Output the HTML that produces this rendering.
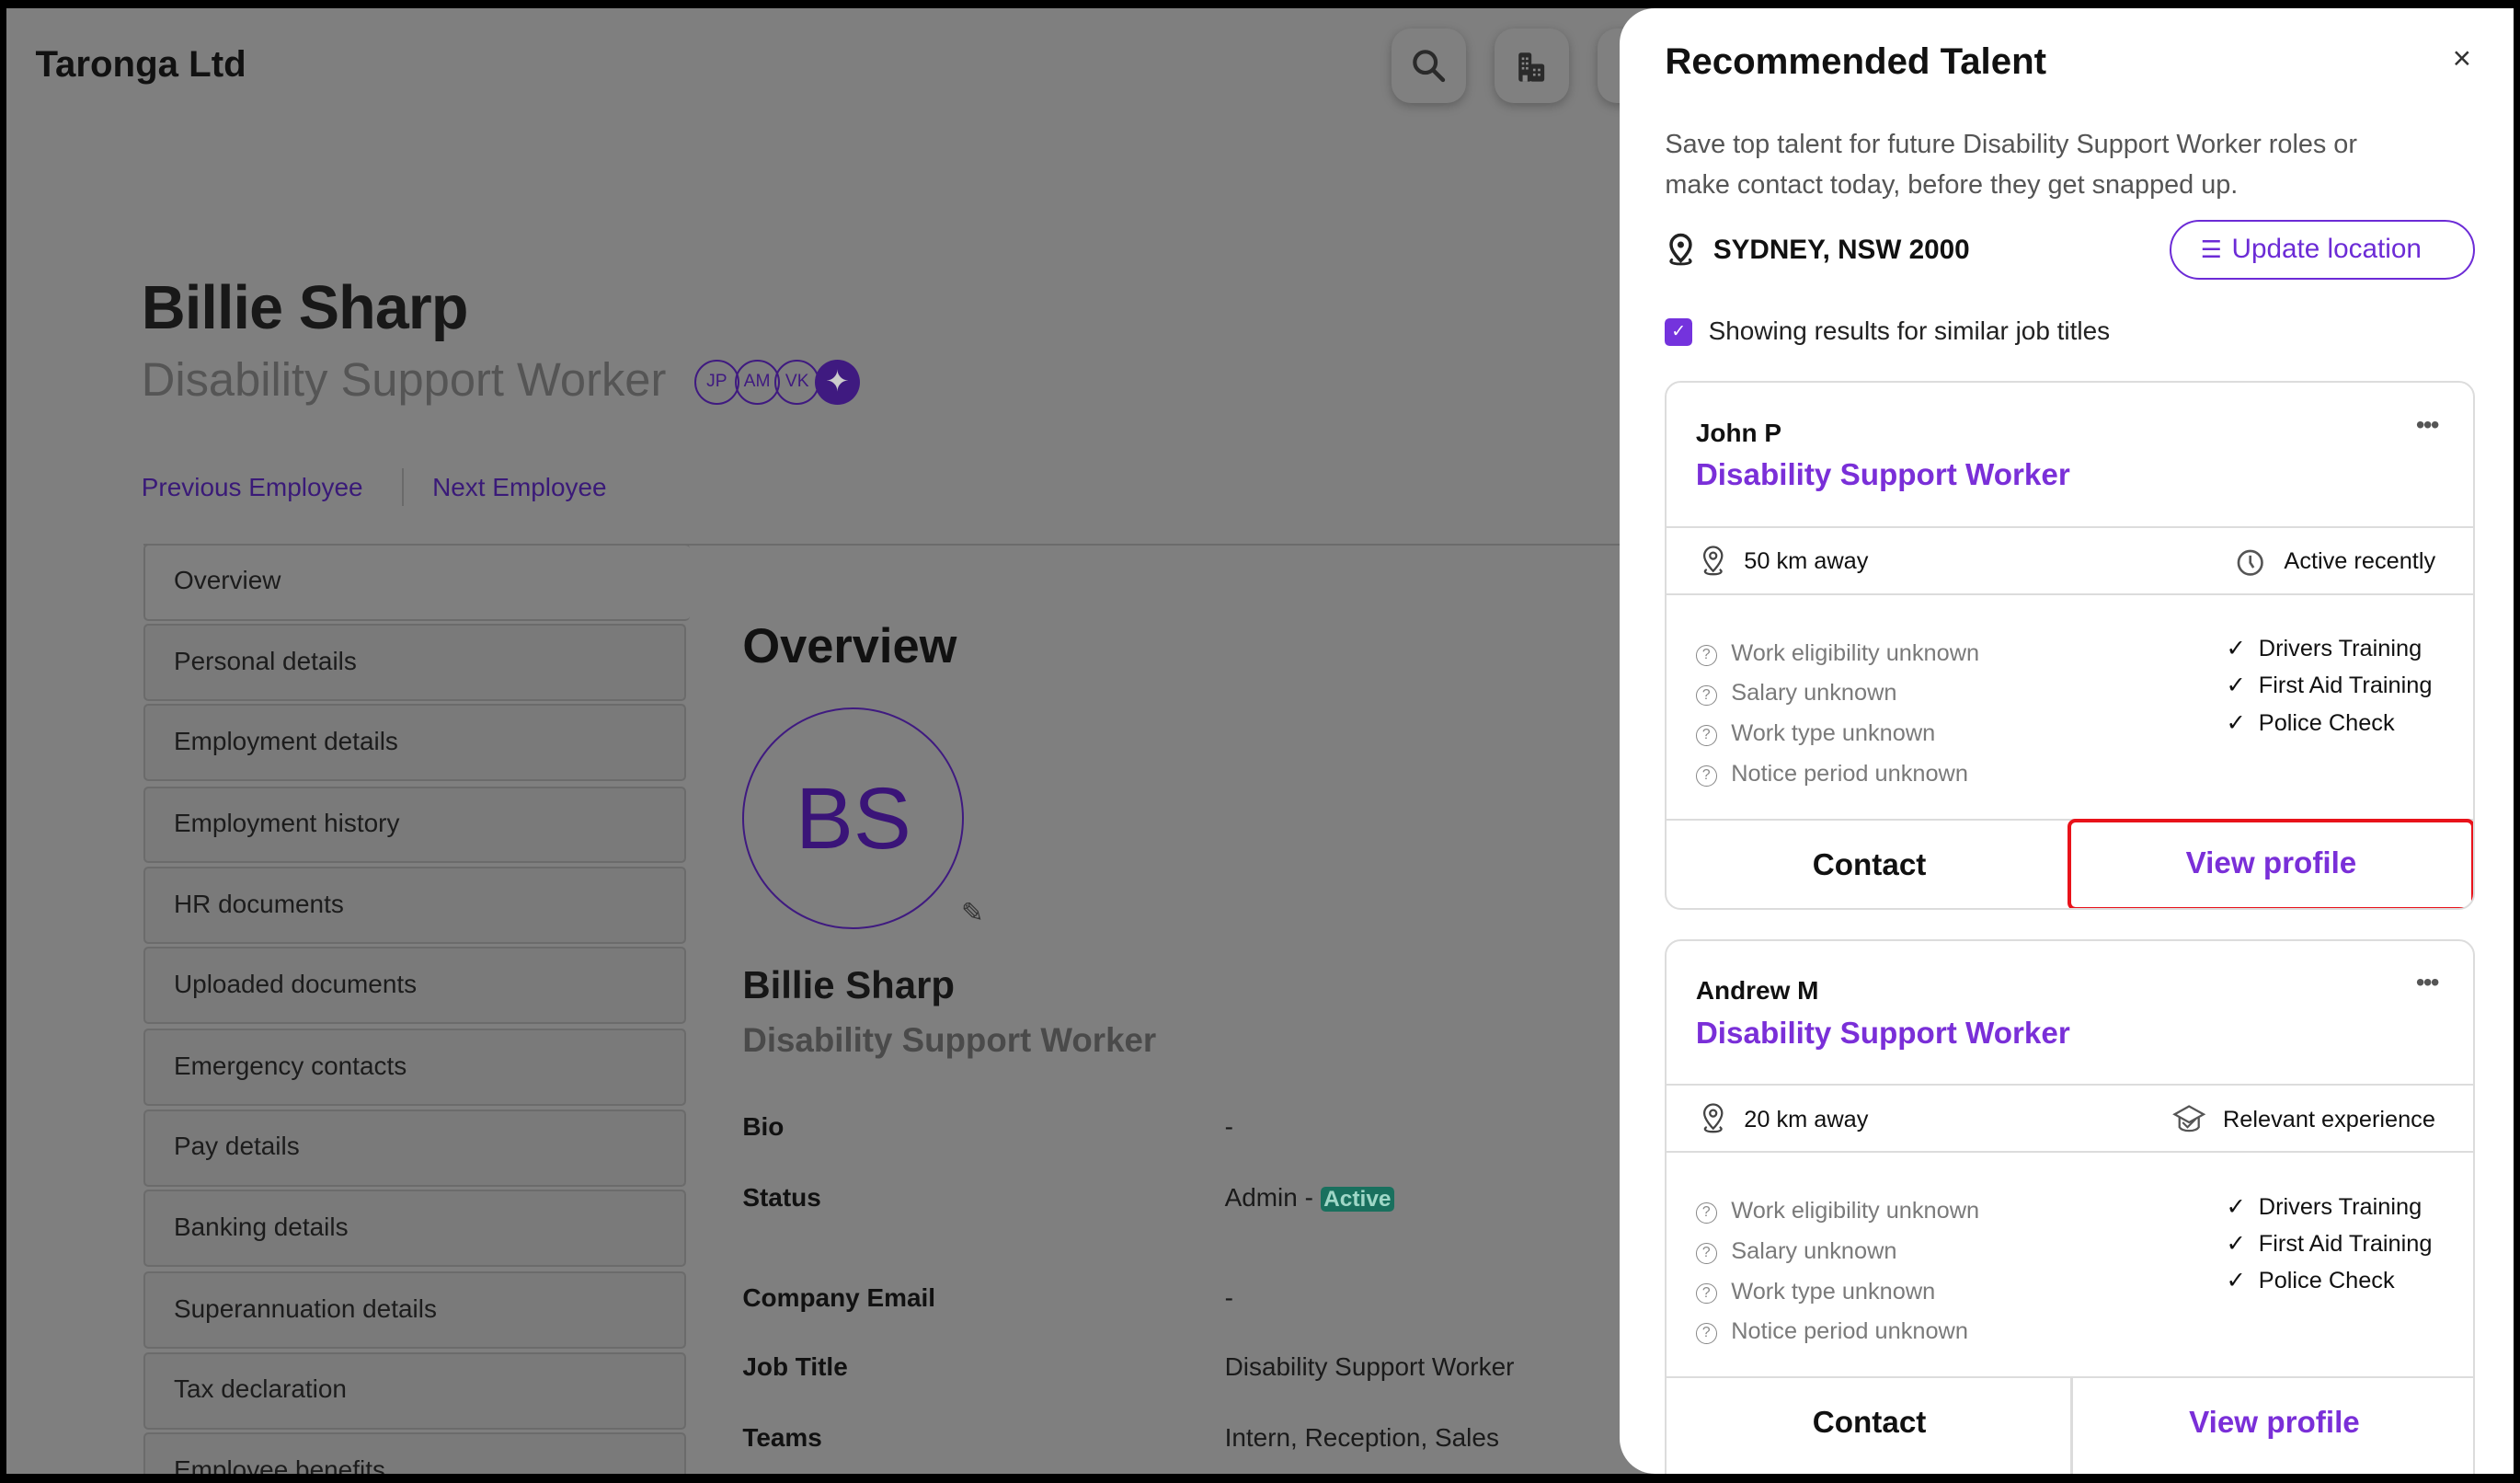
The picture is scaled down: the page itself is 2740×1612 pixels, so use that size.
<!DOCTYPE html>
<html><head><meta charset="utf-8"><style>
*{box-sizing:border-box;margin:0;padding:0}
html,body{width:2740px;height:1612px;overflow:hidden;background:#000}
#w{zoom:1.7475;width:1568px;height:922.5px;position:relative;background:#000;font-family:"Liberation Sans",sans-serif;overflow:hidden}
#bg{position:absolute;left:4px;top:5px;width:1560px;height:912px;background:#7f7f7f;overflow:hidden}
.a{position:absolute;white-space:nowrap}
.tb{position:absolute;top:13px;width:46px;height:46px;border-radius:12px;background:#808080;box-shadow:0 2px 6px rgba(0,0,0,.25)}
.nav{position:absolute;left:85px;width:338px;height:48px;border:1.5px solid #6b6b6b;border-radius:3px;background:#7a7a7a;font-size:16px;color:#1c1c1c;padding:13px 0 0 18px}
.lbl{position:absolute;left:458px;font-size:16px;font-weight:bold;color:#111}
.val{position:absolute;left:758px;font-size:16px;color:#1a1a1a}
#p{position:absolute;left:1008px;top:5px;width:556px;height:912px;background:#fff;border-radius:22px 0 0 22px;overflow:hidden}
.card{position:absolute;left:28px;width:504px;border:1.5px solid #dcdcdc;border-radius:10px;background:#fff;overflow:hidden}
.hl{border-top:1.5px solid #dcdcdc}
.g{color:#7a7a7a;font-size:14.5px}
.k{color:#111;font-size:14.5px}
.q{display:inline-block;width:13px;height:13px;border:1px solid #888;border-radius:50%;font-size:9px;text-align:center;line-height:11px;color:#888;margin-right:9px;vertical-align:1px}
.btn{position:absolute;top:0;height:56px;width:252px;text-align:center;font-size:19px;font-weight:bold;line-height:56px}
.ic{position:absolute}
</style></head><body><div id="w"><div id="bg">
<div class="a" style="left:18px;top:22px;font-size:23px;font-weight:bold;color:#111">Taronga Ltd</div>
<div class="tb" style="left:862px"><svg width="46" height="46" viewBox="0 0 46 46"><circle cx="21" cy="21" r="6.5" fill="none" stroke="#2a2a2a" stroke-width="2.4"/><path d="M26 26l6 6" stroke="#2a2a2a" stroke-width="2.6" stroke-linecap="round"/></svg></div>
<div class="tb" style="left:926px"><svg width="46" height="46" viewBox="0 0 46 46"><rect x="15" y="15" width="8" height="18" rx="1.5" fill="#2a2a2a"/><rect x="22" y="22" width="9" height="11" rx="1.5" fill="#2a2a2a"/><g fill="#888"><rect x="17" y="18" width="1.5" height="1.5"/><rect x="19.5" y="18" width="1.5" height="1.5"/><rect x="17" y="21" width="1.5" height="1.5"/><rect x="19.5" y="21" width="1.5" height="1.5"/><rect x="17" y="24" width="1.5" height="1.5"/><rect x="19.5" y="24" width="1.5" height="1.5"/><rect x="17.5" y="29" width="3" height="4"/><rect x="24" y="25" width="1.5" height="1.5"/><rect x="27" y="25" width="1.5" height="1.5"/><rect x="24" y="28" width="1.5" height="1.5"/><rect x="27" y="28" width="1.5" height="1.5"/></g></svg></div>
<div class="tb" style="left:990px"></div>
<div class="a" style="left:84px;top:165px;font-size:38px;font-weight:bold;color:#181818;letter-spacing:-.5px">Billie Sharp</div>
<div class="a" style="left:84px;top:214px;font-size:29px;color:#555">Disability Support Worker</div>
<div class="a" style="left:428px;top:219px;display:flex">
<span style="width:28px;height:28px;border:1.5px solid #3f1a80;border-radius:50%;font-size:11px;color:#3f1a80;text-align:center;line-height:25px">JP</span>
<span style="width:28px;height:28px;border:1.5px solid #3f1a80;border-radius:50%;font-size:11px;color:#3f1a80;text-align:center;line-height:25px;margin-left:-3px">AM</span>
<span style="width:28px;height:28px;border:1.5px solid #3f1a80;border-radius:50%;font-size:11px;color:#3f1a80;text-align:center;line-height:25px;margin-left:-3px">VK</span>
<span style="width:28px;height:28px;background:#3f1a80;border-radius:50%;margin-left:-3px;color:#ccc;font-size:18px;text-align:center;line-height:28px">✦</span></div>
<div class="a" style="left:84px;top:289px;font-size:16px;color:#3a1a78">Previous Employee</div>
<div class="a" style="left:246px;top:286px;width:1px;height:24px;background:#6a6a6a"></div>
<div class="a" style="left:265px;top:289px;font-size:16px;color:#3a1a78">Next Employee</div>
<div class="a" style="left:85px;top:333px;width:930px;height:1.5px;background:#6b6b6b"></div>
<div class="nav" style="top:333px;width:340px;background:#7f7f7f;border-right:none">Overview</div>
<div class="nav" style="top:383px">Personal details</div>
<div class="nav" style="top:433px">Employment details</div>
<div class="nav" style="top:484px">Employment history</div>
<div class="nav" style="top:534px">HR documents</div>
<div class="nav" style="top:584px">Uploaded documents</div>
<div class="nav" style="top:635px">Emergency contacts</div>
<div class="nav" style="top:685px">Pay details</div>
<div class="nav" style="top:735px">Banking details</div>
<div class="nav" style="top:786px">Superannuation details</div>
<div class="nav" style="top:836px">Tax declaration</div>
<div class="nav" style="top:886px">Employee benefits</div>
<div class="a" style="left:458px;top:380px;font-size:30px;font-weight:bold;color:#111">Overview</div>
<div class="a" style="left:458px;top:435px;width:138px;height:138px;border:1.5px solid #3f1a80;border-radius:50%;text-align:center;line-height:136px;font-size:54px;color:#3a1478">BS</div>
<div class="a" style="left:594px;top:553px;font-size:17px;color:#333">✎</div>
<div class="a" style="left:458px;top:594px;font-size:24px;font-weight:bold;color:#161616">Billie Sharp</div>
<div class="a" style="left:458px;top:630px;font-size:21px;font-weight:bold;color:#4a4a4a">Disability Support Worker</div>
<div class="lbl" style="top:687px">Bio</div><div class="val" style="top:687px">-</div>
<div class="lbl" style="top:731px">Status</div><div class="val" style="top:731px">Admin - <span style="background:#19705e;color:#9fd7c7;font-weight:bold;font-size:14px;padding:0 2px;border-radius:3px">Active</span></div>
<div class="lbl" style="top:793px">Company Email</div><div class="val" style="top:793px">-</div>
<div class="lbl" style="top:836px">Job Title</div><div class="val" style="top:836px">Disability Support Worker</div>
<div class="lbl" style="top:880px">Teams</div><div class="val" style="top:880px">Intern, Reception, Sales</div>
</div>
<div id="p">
<div class="a" style="left:28px;top:20px;font-size:23px;font-weight:bold;color:#111">Recommended Talent</div>
<div class="a" style="left:518px;top:20px;font-size:20px;color:#333">×</div>
<div class="a" style="left:28px;top:73px;font-size:16.5px;color:#555;line-height:25px">Save top talent for future Disability Support Worker roles or<br>make contact today, before they get snapped up.</div>
<svg class="a" style="left:28px;top:139px" width="20" height="24" viewBox="0 0 20 24"><path d="M10 2a6 6 0 0 0-6 6c0 4.5 6 10 6 10s6-5.5 6-10a6 6 0 0 0-6-6z" fill="none" stroke="#222" stroke-width="2"/><circle cx="10" cy="8" r="2" fill="#222"/><path d="M5 17c-2 1-2 3 5 3s7-2 5-3" fill="none" stroke="#222" stroke-width="1.6"/></svg>
<div class="a" style="left:58px;top:141px;font-size:17px;font-weight:bold;color:#111">SYDNEY, NSW 2000</div>
<div class="a" style="left:342px;top:132px;width:190px;height:37px;border:1.5px solid #6c2bd6;border-radius:19px;color:#6c2bd6;font-size:17px;padding:7px 0 0 18px"><span style="font-size:15px;margin-right:6px">☰</span>Update location</div>
<div class="a" style="left:28px;top:193px;width:17px;height:17px;background:#7433dd;border-radius:3px;color:#fff;font-size:11px;text-align:center;line-height:17px">✓</div>
<div class="a" style="left:55px;top:192px;font-size:16px;color:#222">Showing results for similar job titles</div>

<div class="card" style="top:232px;height:329px">
<div class="a" style="left:18px;top:22px;font-size:16px;font-weight:bold;color:#111">John P</div>
<div class="a" style="left:466px;top:17px;font-size:16px;color:#555;letter-spacing:-1px">•••</div>
<div class="a" style="left:18px;top:47px;font-size:19px;font-weight:bold;color:#7a2fd8">Disability Support Worker</div>
<div class="a hl" style="left:0;top:89px;width:504px"></div>
<svg class="ic" style="left:20px;top:100px" width="18" height="22" viewBox="0 0 18 22"><path d="M9 2a5.5 5.5 0 0 0-5.5 5.5C3.5 11.5 9 17 9 17s5.5-5.5 5.5-9.5A5.5 5.5 0 0 0 9 2z" fill="none" stroke="#444" stroke-width="1.3"/><circle cx="9" cy="7.5" r="2" fill="none" stroke="#444" stroke-width="1.3"/><path d="M5 16c-2 1-1.5 3 4 3s6-2 4-3" fill="none" stroke="#444" stroke-width="1.3"/></svg>
<div class="a k" style="left:48px;top:103px">50 km away</div>
<svg class="ic" style="left:354px;top:103px" width="18" height="18" viewBox="0 0 18 18"><circle cx="9" cy="9" r="7.3" fill="none" stroke="#555" stroke-width="1.5"/><path d="M9 4.5V9l2 3" fill="none" stroke="#555" stroke-width="1.5"/></svg>
<div class="a k" style="left:384px;top:103px">Active recently</div>
<div class="a hl" style="left:0;top:131px;width:504px"></div>
<div class="a g" style="left:18px;top:156px;line-height:25px"><span class="q">?</span>Work eligibility unknown<br><span class="q">?</span>Salary unknown<br><span class="q">?</span>Work type unknown<br><span class="q">?</span>Notice period unknown</div>
<div class="a k" style="left:348px;top:154px;line-height:23px">✓&nbsp; Drivers Training<br>✓&nbsp; First Aid Training<br>✓&nbsp; Police Check</div>
<div class="a hl" style="left:0;top:271px;width:504px;height:58px">
<div class="btn" style="left:0;color:#111">Contact</div>
<div class="btn" style="left:249px;color:#7a2fd8;border:2.5px solid #e8121a;border-radius:5px;height:57px;top:-1px;width:254px;line-height:52px">View profile</div></div>
</div>

<div class="card" style="top:579px;height:345px">
<div class="a" style="left:18px;top:22px;font-size:16px;font-weight:bold;color:#111">Andrew M</div>
<div class="a" style="left:466px;top:17px;font-size:16px;color:#555;letter-spacing:-1px">•••</div>
<div class="a" style="left:18px;top:47px;font-size:19px;font-weight:bold;color:#7a2fd8">Disability Support Worker</div>
<div class="a hl" style="left:0;top:89px;width:504px"></div>
<svg class="ic" style="left:20px;top:100px" width="18" height="22" viewBox="0 0 18 22"><path d="M9 2a5.5 5.5 0 0 0-5.5 5.5C3.5 11.5 9 17 9 17s5.5-5.5 5.5-9.5A5.5 5.5 0 0 0 9 2z" fill="none" stroke="#444" stroke-width="1.3"/><circle cx="9" cy="7.5" r="2" fill="none" stroke="#444" stroke-width="1.3"/><path d="M5 16c-2 1-1.5 3 4 3s6-2 4-3" fill="none" stroke="#444" stroke-width="1.3"/></svg>
<div class="a k" style="left:48px;top:103px">20 km away</div>
<svg class="ic" style="left:314px;top:101px" width="22" height="22" viewBox="0 0 22 22"><path d="M11 2L2 7l9 5 9-5z" fill="none" stroke="#555" stroke-width="1.3"/><path d="M5 9v6c2 3 10 3 12 0V9" fill="none" stroke="#555" stroke-width="1.3"/><path d="M7 12l3 3 5-5" fill="none" stroke="#555" stroke-width="1.2"/></svg>
<div class="a k" style="left:346px;top:103px">Relevant experience</div>
<div class="a hl" style="left:0;top:131px;width:504px"></div>
<div class="a g" style="left:18px;top:156px;line-height:25px"><span class="q">?</span>Work eligibility unknown<br><span class="q">?</span>Salary unknown<br><span class="q">?</span>Work type unknown<br><span class="q">?</span>Notice period unknown</div>
<div class="a k" style="left:348px;top:154px;line-height:23px">✓&nbsp; Drivers Training<br>✓&nbsp; First Aid Training<br>✓&nbsp; Police Check</div>
<div class="a hl" style="left:0;top:271px;width:504px;height:70px">
<div class="btn" style="left:0;color:#111">Contact</div>
<div class="a" style="left:251px;top:0;width:1.5px;height:70px;background:#dcdcdc"></div>
<div class="btn" style="left:252px;color:#7a2fd8">View profile</div></div>
</div>
</div>
</div></body></html>
